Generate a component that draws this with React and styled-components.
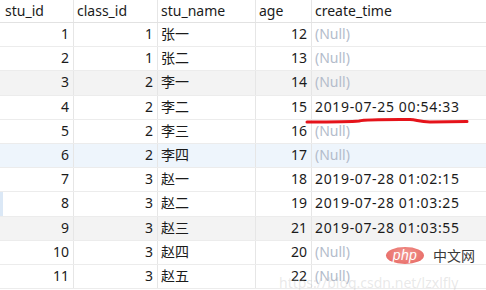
import React from "react";
import styled, { createGlobalStyle } from "styled-components";

const Global = createGlobalStyle`
  html, body { margin: 0; padding: 0; background: #fff; }
  body { width: 486px; height: 290px; overflow: hidden; }
  * { box-sizing: border-box; }
`;

const Page = styled.div`
  position: relative;
  width: 486px;
  height: 290px;
  overflow: hidden;
  font-family: "Noto Sans", "Noto Sans CJK SC", sans-serif;
  font-size: 14px;
  color: #1b1b1b;
  background: #fff;
`;

const Row = styled.div`
  display: grid;
  grid-template-columns: 74px 84px 98px 56px 1fr;
  height: ${(p) => (p.$header ? "23px" : "24.2px")};
  background: ${(p) =>
    p.$tone === "gray" ? "#f3f3f3" : p.$tone === "blue" ? "#eef5fc" : "#fff"};
  border-bottom: 1px solid ${(p) => (p.$header ? "#e2e2e2" : "#ececec")};
  box-shadow: ${(p) => (p.$marker ? "inset 3px 0 0 #dbe8f6" : "none")};
`;

const Cell = styled.div`
  border-right: 1px solid #e6e6e6;
  padding: 0 ${(p) => (p.$right ? "4px" : "3px")};
  text-align: ${(p) => (p.$right ? "right" : "left")};
  line-height: 22px;
  white-space: nowrap;
  overflow: hidden;
  color: ${(p) => (p.$null ? "#b3bccb" : "inherit")};
  letter-spacing: ${(p) => (p.$date ? "0.65px" : "0")};
  &:first-child { padding-left: ${(p) => (p.$header ? "5px" : "3px")}; }
  &:last-child { border-right: none; }
`;

const Overlay = styled.svg`
  position: absolute;
  left: 0;
  top: 0;
  pointer-events: none;
`;

const PhpMark = styled.div`
  position: absolute;
  left: 386px;
  top: 247px;
  display: flex;
  align-items: center;
  gap: 9px;
`;

const PhpOval = styled.div`
  width: 38px;
  height: 17px;
  border-radius: 50%;
  background: radial-gradient(ellipse at 50% 40%, #f29a93 0%, #e9716c 70%, #e4625e 100%);
  color: #fff;
  font-family: "Liberation Sans", sans-serif;
  font-style: italic;
  font-size: 14px;
  line-height: 16px;
  text-align: center;
  letter-spacing: 0.4px;
`;

const PhpText = styled.span`
  font-family: "Noto Sans CJK SC", sans-serif;
  font-size: 14px;
  color: #3a3a3a;
  line-height: 17px;
`;

const Watermark = styled.div`
  position: absolute;
  left: 279px;
  top: 276px;
  font-size: 14px;
  line-height: 1;
  color: rgba(180, 180, 180, 0.3);
  white-space: nowrap;
`;

const rows = [
  [1, 1, "张一", 12, null],
  [2, 1, "张二", 13, null],
  [3, 2, "李一", 14, null],
  [4, 2, "李二", 15, "2019-07-25 00:54:33"],
  [5, 2, "李三", 16, null],
  [6, 2, "李四", 17, null],
  [7, 3, "赵一", 18, "2019-07-28 01:02:15"],
  [8, 3, "赵二", 19, "2019-07-28 01:03:25"],
  [9, 3, "赵三", 21, "2019-07-28 01:03:55"],
  [10, 3, "赵四", 20, null],
  [11, 3, "赵五", 22, null],
];

const tones = { 3: "gray", 6: "blue", 9: "gray" };

export default function App() {
  return (
    <Page>
      <Global />
      <Row $header>
        <Cell $header>stu_id</Cell>
        <Cell $header>class_id</Cell>
        <Cell $header>stu_name</Cell>
        <Cell $header>age</Cell>
        <Cell $header>create_time</Cell>
      </Row>
      {rows.map(([id, cls, name, age, time]) => (
        <Row key={id} $tone={tones[id]} $marker={id === 8}>
          <Cell $right>{id}</Cell>
          <Cell $right>{cls}</Cell>
          <Cell>{name}</Cell>
          <Cell $right>{age}</Cell>
          {time ? <Cell $date>{time}</Cell> : <Cell $null>(Null)</Cell>}
        </Row>
      ))}
      <Overlay width="486" height="290" viewBox="0 0 486 290">
        <path
          d="M307 122 C 330 122, 350 122, 359 121 C 366 119.3, 380 119.5, 410 119.5 C 417 119.8, 419 122, 430 122 L 467 121.5"
          fill="none"
          stroke="#e5131a"
          strokeWidth="3"
          strokeLinecap="round"
          strokeLinejoin="round"
        />
      </Overlay>
      <PhpMark>
        <PhpOval>php</PhpOval>
        <PhpText>中文网</PhpText>
      </PhpMark>
      <Watermark>https://blog.csdn.net/lzxlfly</Watermark>
    </Page>
  );
}
